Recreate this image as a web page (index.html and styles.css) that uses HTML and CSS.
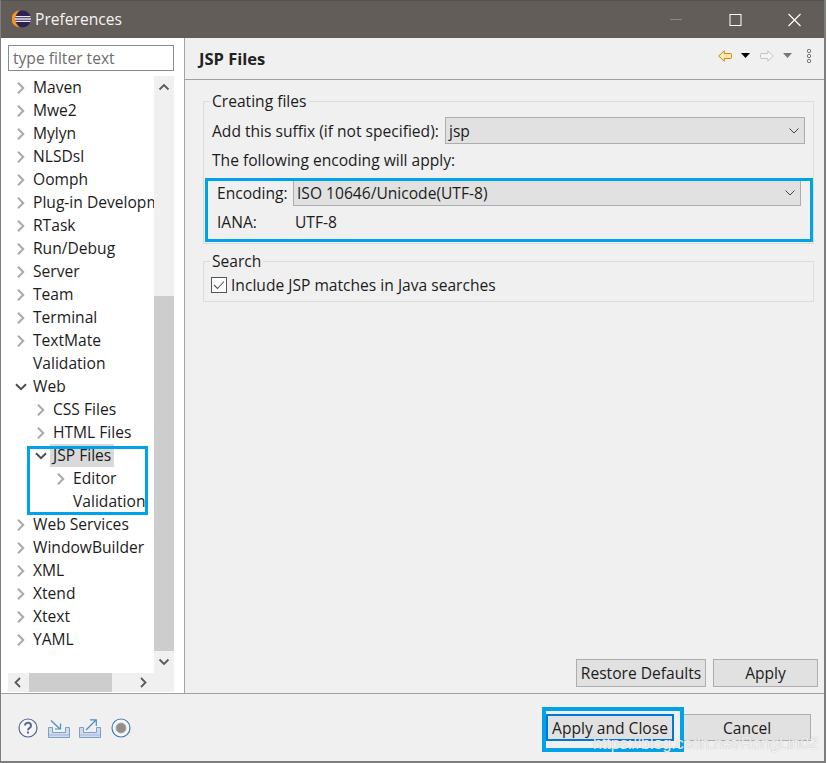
FILE: index.html
```html
<!DOCTYPE html>
<html lang="en">
<head>
<meta charset="utf-8">
<title>Preferences</title>
<link rel="stylesheet" href="styles.css">
</head>
<body>
<div class="window">
  <header class="titlebar">
    <svg class="app-icon" width="20" height="20" viewBox="0 0 20 20">
      <circle cx="10.500" cy="10" r="8.500" fill="#2c2255"/>
      <path d="M8 1.500A8.500 8.500 0 0 0 8 18.500 10 10 0 0 1 8 1.500Z" fill="#f7941e"/>
      <path d="M3.500 7.600h15M3 10h16M3.500 12.400h15" stroke="#e8e6f2" stroke-width="1.300"/>
    </svg>
    <span class="title-text">Preferences</span>
    <div class="win-controls">
      <svg width="59" height="37" viewBox="0 0 59 37"><path d="M23 18.500h12" stroke="#8c8883"/></svg>
      <svg width="59" height="37" viewBox="0 0 59 37"><rect x="24" y="13.500" width="11" height="11" fill="none" stroke="#fff"/></svg>
      <svg width="59" height="37" viewBox="0 0 59 37"><path d="M23.500 13l12 12M35.500 13l-12 12" stroke="#fff" stroke-width="1.100"/></svg>
    </div>
  </header>

  <div class="main">
    <aside class="sidebar">
      <input class="filter" type="text" placeholder="type filter text">
      <div class="tree-wrap">
        <div class="tree-view">
          <ul class="tree">
            <li class="row"><svg class="tw" viewBox="0 0 12 12"><path d="M3 .8L8.200 6 3 11.200"/></svg>Maven</li>
            <li class="row"><svg class="tw" viewBox="0 0 12 12"><path d="M3 .8L8.200 6 3 11.200"/></svg>Mwe2</li>
            <li class="row"><svg class="tw" viewBox="0 0 12 12"><path d="M3 .8L8.200 6 3 11.200"/></svg>Mylyn</li>
            <li class="row"><svg class="tw" viewBox="0 0 12 12"><path d="M3 .8L8.200 6 3 11.200"/></svg>NLSDsl</li>
            <li class="row"><svg class="tw" viewBox="0 0 12 12"><path d="M3 .8L8.200 6 3 11.200"/></svg>Oomph</li>
            <li class="row"><svg class="tw" viewBox="0 0 12 12"><path d="M3 .8L8.200 6 3 11.200"/></svg>Plug-in Development</li>
            <li class="row"><svg class="tw" viewBox="0 0 12 12"><path d="M3 .8L8.200 6 3 11.200"/></svg>RTask</li>
            <li class="row"><svg class="tw" viewBox="0 0 12 12"><path d="M3 .8L8.200 6 3 11.200"/></svg>Run/Debug</li>
            <li class="row"><svg class="tw" viewBox="0 0 12 12"><path d="M3 .8L8.200 6 3 11.200"/></svg>Server</li>
            <li class="row"><svg class="tw" viewBox="0 0 12 12"><path d="M3 .8L8.200 6 3 11.200"/></svg>Team</li>
            <li class="row"><svg class="tw" viewBox="0 0 12 12"><path d="M3 .8L8.200 6 3 11.200"/></svg>Terminal</li>
            <li class="row"><svg class="tw" viewBox="0 0 12 12"><path d="M3 .8L8.200 6 3 11.200"/></svg>TextMate</li>
            <li class="row leaf">Validation</li>
            <li class="row"><svg class="tw open" viewBox="0 0 12 12"><path d="M1 3.200L6 8.200l5-5"/></svg>Web</li>
            <li class="row l2"><svg class="tw" viewBox="0 0 12 12"><path d="M3 .8L8.200 6 3 11.200"/></svg>CSS Files</li>
            <li class="row l2"><svg class="tw" viewBox="0 0 12 12"><path d="M3 .8L8.200 6 3 11.200"/></svg>HTML Files</li>
            <li class="row l2"><svg class="tw open" viewBox="0 0 12 12"><path d="M1 3.200L6 8.200l5-5"/></svg><span class="selected">JSP Files</span></li>
            <li class="row l3"><svg class="tw" viewBox="0 0 12 12"><path d="M3 .8L8.200 6 3 11.200"/></svg>Editor</li>
            <li class="row l3 leaf">Validation</li>
            <li class="row"><svg class="tw" viewBox="0 0 12 12"><path d="M3 .8L8.200 6 3 11.200"/></svg>Web Services</li>
            <li class="row"><svg class="tw" viewBox="0 0 12 12"><path d="M3 .8L8.200 6 3 11.200"/></svg>WindowBuilder</li>
            <li class="row"><svg class="tw" viewBox="0 0 12 12"><path d="M3 .8L8.200 6 3 11.200"/></svg>XML</li>
            <li class="row"><svg class="tw" viewBox="0 0 12 12"><path d="M3 .8L8.200 6 3 11.200"/></svg>Xtend</li>
            <li class="row"><svg class="tw" viewBox="0 0 12 12"><path d="M3 .8L8.200 6 3 11.200"/></svg>Xtext</li>
            <li class="row"><svg class="tw" viewBox="0 0 12 12"><path d="M3 .8L8.200 6 3 11.200"/></svg>YAML</li>
          </ul>
          <div class="vscroll">
            <svg class="sb-arrow" width="20" height="20" viewBox="0 0 20 20"><path d="M5.500 13.500L10 9l4.500 4.500"/></svg>
            <div class="v-track"><div class="v-thumb"></div></div>
            <svg class="sb-arrow" width="20" height="22" viewBox="0 0 20 22"><path d="M5.500 8.500L10 13l4.500-4.500"/></svg>
          </div>
        </div>
        <div class="hscroll">
          <svg class="sb-arrow" width="21" height="19" viewBox="0 0 21 19"><path d="M12 5L7.500 9.500 12 14"/></svg>
          <div class="h-thumb"></div>
          <svg class="sb-arrow" width="21" height="19" viewBox="0 0 21 19"><path d="M9 5l4.500 4.500L9 14"/></svg>
        </div>
      </div>
    </aside>

    <section class="content">
      <div class="page-head">
        <h1>JSP Files</h1>
        <div class="page-tools">
          <svg width="14" height="12" viewBox="0 0 14 12"><path d="M.7 6L6.200.8v2.700h6.600a.7.7 0 0 1 .7.700v3.600a.7.7 0 0 1-.7.700H6.200v2.700z" fill="#fde9b0" stroke="#c98a12"/></svg>
          <svg class="drop" width="9" height="5" viewBox="0 0 9 5"><path d="M0 0h9L4.500 5z" fill="#000"/></svg>
          <svg class="fwd" width="14" height="12" viewBox="0 0 14 12"><path d="M13.300 6L7.800.8v2.700H1.200a.7.7 0 0 0-.7.700v3.600a.7.7 0 0 0 .7.700h6.600v2.700z" fill="#f4f4f4" stroke="#c4c4c4"/></svg>
          <svg class="drop" width="9" height="5" viewBox="0 0 9 5"><path d="M0 0h9L4.500 5z" fill="#777"/></svg>
          <svg class="kebab" width="6" height="14" viewBox="0 0 6 14"><g fill="none" stroke="#777"><circle cx="3" cy="2" r="1.700"/><circle cx="3" cy="7" r="1.700"/><circle cx="3" cy="12" r="1.700"/></g></svg>
        </div>
      </div>

      <div class="page-body">
        <fieldset class="group">
          <legend>Creating files</legend>
          <div class="field suffix">
            <label>Add this suffix (if not specified):</label>
            <div class="combo suffix-combo"><span>jsp</span><svg width="10" height="6" viewBox="0 0 10 6"><path d="M.5.500L5 5 9.500.5"/></svg></div>
          </div>
          <p class="note">The following encoding will apply:</p>
          <div class="encoding">
            <div class="field">
              <label class="enc-label">Encoding:</label>
              <div class="combo enc-combo"><span>ISO 10646/Unicode(UTF-8)</span><svg width="10" height="6" viewBox="0 0 10 6"><path d="M.5.500L5 5 9.500.5"/></svg></div>
            </div>
            <div class="field iana">
              <label class="enc-label">IANA:</label>
              <span class="iana-value">UTF-8</span>
            </div>
          </div>
        </fieldset>

        <fieldset class="group search">
          <legend>Search</legend>
          <div class="check-row">
            <svg class="check" width="16" height="16" viewBox="0 0 16 16"><rect x=".5" y=".5" width="15" height="15" fill="#fff" stroke="#555"/><path d="M3 8l3.500 3.500L13 4.500" fill="none" stroke="#555" stroke-width="1.100"/></svg>
            <span>Include JSP matches in Java searches</span>
          </div>
        </fieldset>

        <div class="page-actions">
          <button class="btn restore" type="button">Restore Defaults</button>
          <button class="btn apply" type="button">Apply</button>
        </div>
      </div>
    </section>
  </div>

  <footer class="footer">
    <div class="foot-icons">
      <svg class="ic-help" width="20" height="20" viewBox="0 0 20 20"><circle cx="10" cy="10" r="9" fill="#f6f7fa" stroke="#54688f" stroke-width="1.200"/><path d="M7 7.500a3 2.800 0 1 1 4.700 2.300c-1.200.8-1.700 1.200-1.700 2.500" fill="none" stroke="#54688f" stroke-width="2"/><rect x="9" y="13.500" width="2" height="2" fill="#54688f"/></svg>
      <svg class="ic-import" width="22" height="18" viewBox="0 0 22 18"><path d="M.5 7.500v10h21v-10h-4v5h-13v-5z" fill="#cfdcec" stroke="#7f9fc8"/><path d="M1 15h20" stroke="#9db7d8"/><path d="M3 .5l8.500 8M12.500 3.500v5.500H7" fill="none" stroke="#4a8fc4" stroke-width="1.200"/></svg>
      <svg class="ic-export" width="22" height="19" viewBox="0 0 22 19"><path d="M.5 8.500v10h21v-10h-4v5h-13v-5z" fill="#cfdcec" stroke="#7f9fc8"/><path d="M1 16h20" stroke="#9db7d8"/><path d="M7 11l10-10M11 .9h6.300v6" fill="none" stroke="#4a8fc4" stroke-width="1.200"/></svg>
      <svg class="ic-rec" width="20" height="20" viewBox="0 0 20 20"><circle cx="10" cy="10" r="9" fill="#f8f8f8" stroke="#3f7fb5" stroke-width="1.200"/><circle cx="10" cy="10" r="5" fill="#8f8f8f" stroke="#a8a8a8"/></svg>
    </div>
    <div class="foot-buttons">
      <button class="btn primary" type="button">Apply and Close</button>
      <button class="btn cancel" type="button">Cancel</button>
    </div>
  </footer>

  <div class="mark mark-tree"></div>
  <div class="mark mark-encoding"></div>
  <div class="mark mark-apply"></div>
  <div class="watermark">https://blog.csdn.net/RongLin02</div>
</div>
</body>
</html>
```

FILE: styles.css
```css
* { box-sizing: border-box; }
html, body { margin: 0; padding: 0; background: #fff; }
body {
  width: 827px;
  height: 763px;
  overflow: hidden;
  font-family: "Open Sans", "Noto Sans", sans-serif;
  font-size: 15.600px;
  color: #1c1c1c;
}
.window {
  position: relative;
  width: 826px;
  height: 763px;
  display: flex;
  flex-direction: column;
  border: 1px solid #7d7d7d;
  border-top: 0;
  border-right-width: 2px;
  border-bottom-width: 2px;
  background: #f0f0f0;
}
.titlebar {
  flex: 0 0 38px;
  display: flex;
  align-items: center;
  background: #625d58;
  border-top: 1px solid #55514d;
  color: #f4f4f4;
  padding-left: 11px;
}
.app-icon { margin-bottom: 1px; }
.title-text { margin-left: 3px; margin-bottom: 2px; }
.win-controls { margin-left: auto; display: flex; }
.win-controls svg { display: block; }

.main { flex: 1; display: flex; min-height: 0; }
.sidebar {
  flex: 0 0 184px;
  background: #fff;
  border-right: 1px solid #a3a3a3;
  padding: 7px 9px 0 7px;
  display: flex;
  flex-direction: column;
}
.filter {
  display: block;
  width: 166px;
  height: 26px;
  flex: none;
  border: 1px solid #8a8a8a;
  padding: 0 4px;
  font: inherit;
  outline: 0;
  color: #555;
}
.filter::placeholder { color: #6d6d6d; opacity: 1; }
.tree-wrap { margin-top: 5px; flex: 1; display: flex; flex-direction: column; width: 166px; min-height: 0; }
.tree-view { flex: 1; display: flex; min-height: 0; }
.tree { flex: 1; min-width: 0; margin: 0; padding: 0; list-style: none; overflow: hidden; }
.row {
  height: 23px;
  display: flex;
  align-items: center;
  padding-left: 7px;
  white-space: nowrap;
  line-height: 23px;
}
.row.l2 { padding-left: 27px; }
.row.l3 { padding-left: 47px; }
.row.leaf { padding-left: 25px; }
.row.l3.leaf { padding-left: 65px; }
.tw {
  flex: none;
  width: 12px;
  height: 12px;
  margin-right: 6px;
  fill: none;
  stroke: #a9a9a9;
  stroke-width: 2;
}
.tw.open { stroke: #4f4f4f; }
.selected { background: #d9d9d9; padding: 0 3px; margin-left: -3px; line-height: 23px; height: 23px; }
.vscroll { flex: 0 0 20px; display: flex; flex-direction: column; background: #f0f0f0; }
.v-track { flex: 1; display: flex; flex-direction: column; justify-content: flex-end; }
.v-thumb { height: 355px; background: #cdcdcd; }
.sb-arrow { display: block; flex: none; fill: none; stroke: #5a5a5a; stroke-width: 1.800; }
.hscroll { flex: 0 0 19px; height: 19px; display: flex; background: #f0f0f0; margin-bottom: 1px; }
.h-thumb { width: 83px; background: #cdcdcd; }
.hscroll .sb-arrow:last-child { margin-left: 20px; }

.content { flex: 1; min-width: 0; display: flex; flex-direction: column; }
.page-head {
  flex: 0 0 42px;
  display: flex;
  align-items: center;
  justify-content: space-between;
  border-bottom: 1px solid #a0a0a0;
  padding: 0 12px 0 14px;
}
h1 { margin: 0; font-size: 16.500px; font-weight: 700; color: #222; }
.page-tools { display: flex; align-items: center; margin-bottom: 6px; }
.page-tools svg { display: block; }
.drop { margin-left: 9px; }
.fwd { margin-left: 10px; }
.kebab { margin-left: 14px; }

.page-body { flex: 1; display: flex; flex-direction: column; padding: 11px 10px 6px 18px; min-height: 0; }
.group { margin: 0; padding: 0 8px 0 8px; border: 1px solid #dcdcdc; min-width: 0; height: 153px; }
.group.search { margin-top: 7px; height: 51px; }
legend { padding: 0 2px; margin-left: -2px; line-height: 21px; }
.field { display: flex; align-items: center; }
.suffix { height: 27px; margin-top: 5px; }
.suffix label { width: 233px; flex: none; }
.combo {
  display: flex;
  align-items: center;
  justify-content: space-between;
  height: 27px;
  background: #e1e1e1;
  border: 1px solid #adadad;
  padding: 0 5px 0 3px;
}
.combo svg { fill: none; stroke: #444; stroke-width: 1; flex: none; }
.suffix-combo { width: 360px; }
.note { margin: 5px 0 0; height: 23px; line-height: 23px; }
.encoding { margin: 5px -6px 0 0; padding: 3px 0 0 5px; }
.enc-label { width: 76px; flex: none; }
.enc-combo { width: 508px; height: 26px; }
.iana { height: 26px; margin-top: 3px; }
.iana-value { padding-left: 2px; }
.check-row { display: flex; align-items: center; gap: 4px; height: 24px; margin: 1px 0 0 -1px; }
.check { flex: none; }
.page-actions { margin-top: auto; display: flex; justify-content: flex-end; gap: 7px; margin-right: -4px; }
.btn {
  height: 28px;
  padding: 0;
  border: 1px solid #adadad;
  background: #e1e1e1;
  font: inherit;
  color: #1c1c1c;
}
.restore { width: 130px; }
.apply { width: 105px; }

.footer {
  flex: 0 0 68px;
  display: flex;
  align-items: center;
  justify-content: space-between;
  border-top: 1px solid #a0a0a0;
  padding: 0 13px 0 17px;
}
.foot-icons { display: flex; align-items: flex-end; }
.foot-icons svg { display: block; }
.ic-import { margin-left: 10px; }
.ic-export { margin-left: 9px; }
.ic-rec { margin-left: 10px; }
.foot-buttons { display: flex; gap: 9px; }
.primary { width: 128px; height: 27px; border: 2px solid #0078d7; background: #e1e1e1; }
.cancel { width: 128px; height: 27px; }

.mark { position: absolute; border: 3px solid #00a2e8; pointer-events: none; }
.mark-tree { left: 26px; top: 446px; width: 121px; height: 69px; }
.mark-encoding { left: 204px; top: 178px; width: 608px; height: 64px; }
.mark-apply { left: 541px; top: 707px; width: 142px; height: 45px; border-width: 4px; }
.watermark {
  position: absolute;
  left: 592px;
  top: 735px;
  font-family: "Liberation Sans", sans-serif;
  font-size: 16px;
  color: rgba(255, 255, 255, .85);
  text-shadow: 0 0 1px rgba(120, 120, 120, .6);
  white-space: nowrap;
}
```
